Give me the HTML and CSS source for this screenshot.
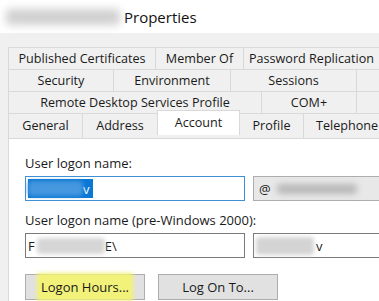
FILE: index.html
```html
<!DOCTYPE html>
<html>
  <head>
    <meta charset="UTF-8" />
    <title>Properties</title>
    <link rel="stylesheet" href="styles.css">
  </head>
  <body>
    <div class="titlebar">
      <span class="smudge name-smudge"></span>
      <span class="title">Properties</span>
    </div>
    <div class="tabs">
      <div class="row">
        <div class="tab t-pub">Published Certificates</div>
        <div class="tab t-member">Member Of</div>
        <div class="tab t-pass">Password Replication</div>
      </div>
      <div class="row">
        <div class="tab t-sec">Security</div>
        <div class="tab t-env">Environment</div>
        <div class="tab t-sess">Sessions</div>
        <div class="tab t-more">&nbsp;</div>
      </div>
      <div class="row">
        <div class="tab t-rds">Remote Desktop Services Profile</div>
        <div class="tab t-com">COM+</div>
        <div class="tab t-more">&nbsp;</div>
      </div>
      <div class="row front">
        <div class="tab t-gen">General</div>
        <div class="tab t-addr">Address</div>
        <div class="tab t-acc active">Account</div>
        <div class="tab t-prof">Profile</div>
        <div class="tab t-tel">Telephone</div>
      </div>
    </div>
    <div class="panel">
      <label class="field-label">User logon name:</label>
      <div class="field-row">
        <div class="input focused">
          <span class="selection"><span class="smudge sel-smudge"></span>v</span>
        </div>
        <div class="input readonly">
          <span>@</span><span class="smudge domain-smudge"></span>
        </div>
      </div>
      <label class="field-label second">User logon name (pre-Windows 2000):</label>
      <div class="field-row">
        <div class="input">
          <span>F</span><span class="smudge pre-smudge"></span><span>E\</span>
        </div>
        <div class="input">
          <span class="smudge user-smudge"></span><span>v</span>
        </div>
      </div>
      <div class="buttons">
        <button class="btn"><span class="marker">Logon Hours...</span></button>
        <button class="btn">Log On To...</button>
      </div>
    </div>
  </body>
</html>
```

FILE: styles.css
```css
* {
  margin: 0;
  padding: 0;
  box-sizing: border-box;
}
body {
  width: 379px;
  height: 301px;
  overflow: hidden;
  background-color: #f0f0f0;
  font-family: "Open Sans", "Liberation Sans", sans-serif;
  font-size: 13px;
  color: #1a1a1a;
}
.smudge {
  display: inline-block;
  background-color: #b8b8b8;
  filter: blur(3px);
  border-radius: 4px;
}
.titlebar {
  height: 33px;
  background-color: #fff;
  display: flex;
  align-items: center;
  padding-left: 6px;
}
.name-smudge {
  width: 114px;
  height: 16px;
  background-color: #d0d0d0;
  filter: blur(4px);
}
.title {
  margin-left: 4px;
  font-size: 15px;
  color: #111;
}
.tabs {
  padding: 14px 0 0 8px;
  font-size: 12.6px;
}
.row {
  display: flex;
  height: 22px;
  white-space: nowrap;
}
.tab {
  flex: none;
  height: 22px;
  line-height: 21px;
  text-align: center;
  border: 1px solid #d9d9d9;
  border-bottom: none;
  border-right: none;
  background-color: #f0f0f0;
  overflow: hidden;
}
.row.front {
  height: 25px;
}
.row.front .tab {
  height: 25px;
  line-height: 24px;
}
.tab.active {
  background-color: #fff;
  height: 28px;
  line-height: 26px;
  margin-top: -3px;
  border-right: 1px solid #d9d9d9;
  position: relative;
  z-index: 1;
}
.t-pub { width: 147px; }
.t-member { width: 88px; }
.t-pass { width: 136px; }
.t-sec { width: 105px; }
.t-env { width: 117px; }
.t-sess { width: 126px; }
.t-more { width: 40px; }
.t-rds { width: 253px; }
.t-com { width: 95px; }
.t-gen { width: 74px; }
.t-addr { width: 75px; }
.t-acc { width: 83px; }
.t-prof { width: 63px; border-left: none; }
.t-tel { width: 76px; text-align: left; padding-left: 12px; }
.panel {
  margin-left: 8px;
  height: 170px;
  background-color: #fff;
  border: 1px solid #d9d9d9;
  border-right: none;
  padding: 16px 0 0 16px;
}
.field-label {
  display: block;
  height: 17px;
  line-height: 17px;
}
.field-label.second {
  margin-top: 11px;
}
.field-row {
  display: flex;
  gap: 8px;
  margin-top: 4px;
  white-space: nowrap;
}
.input {
  flex: none;
  width: 220px;
  height: 25px;
  border: 1px solid #7a7a7a;
  background-color: #fff;
  display: flex;
  align-items: center;
  padding-left: 2px;
}
.input + .input {
  width: 140px;
}
.input.focused {
  border-color: #3f8fd4;
}
.input.readonly {
  background-color: #e8e8e8;
  border-color: #adadad;
  padding-left: 5px;
}
.selection {
  display: flex;
  align-items: center;
  height: 19px;
  padding-right: 3px;
  background-color: #0a78d5;
  color: #fff;
}
.sel-smudge {
  width: 55px;
  height: 15px;
  background-color: #4597de;
  filter: blur(2px);
}
.domain-smudge {
  width: 80px;
  height: 10px;
  margin-left: 6px;
}
.pre-smudge {
  width: 68px;
  height: 16px;
  margin-left: 2px;
  background-color: #d6d6d6;
  filter: blur(2px);
}
.user-smudge {
  width: 58px;
  height: 18px;
  background-color: #d4d4d4;
  filter: blur(2px);
  margin-right: 2px;
}
.buttons {
  display: flex;
  gap: 13px;
  margin-top: 16px;
}
.btn {
  width: 120px;
  height: 26px;
  border: 1px solid #adadad;
  background-color: #e1e1e1;
  font-family: inherit;
  font-size: 13px;
  color: #1a1a1a;
}
.marker {
  background-color: #f2f27a;
  padding: 3px 2px;
  box-shadow: 0 0 4px 2px #f2f27a;
}
```
